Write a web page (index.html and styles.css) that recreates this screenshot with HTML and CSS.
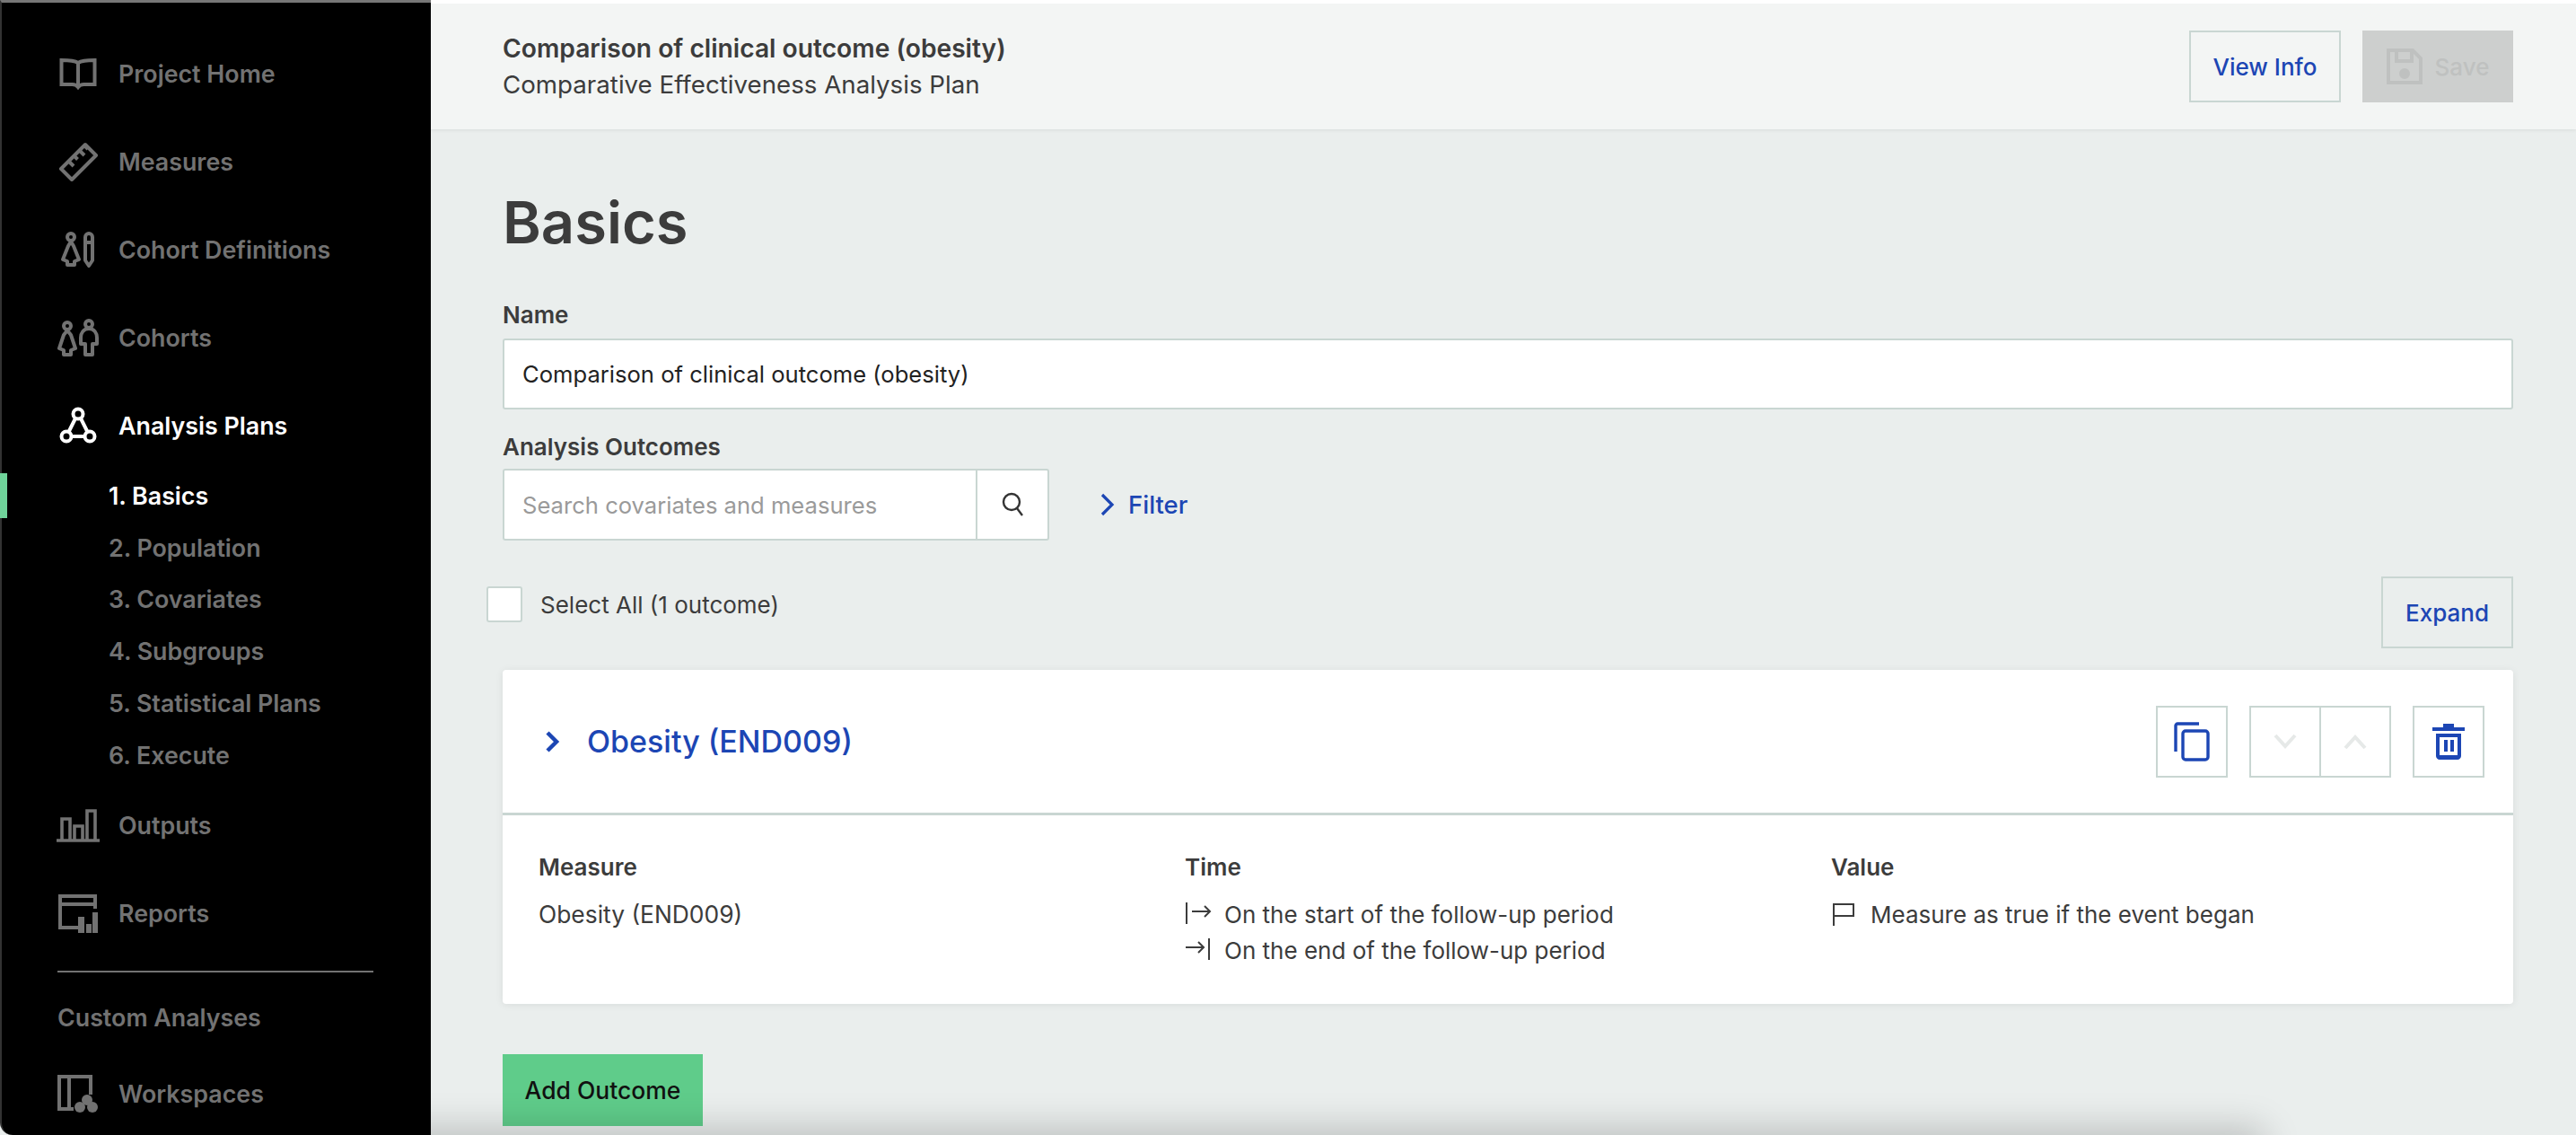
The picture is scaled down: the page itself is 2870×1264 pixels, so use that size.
FILE: index.html
```html
<!DOCTYPE html>
<html>
  <head>
    <title>Basics</title>
    <link rel="stylesheet" href="styles.css">
  </head>
  <body>
    <div class="app">
      <nav class="sidebar">
        <a class="nav-item">
          <span class="nav-icon">
            <svg width="42" height="36" viewBox="0 0 42 36" fill="none" stroke="currentColor" stroke-width="4"><path d="M21 6c-3-2-7-3-18.500-3v27h12c3 0 5 1 6.500 3 1.500-2 3.500-3 6.500-3h12V3C28 3 24 4 21 6zM21 6v27"/></svg>
          </span>
          Project Home
        </a>
        <a class="nav-item">
          <span class="nav-icon">
            <svg width="44" height="44" viewBox="0 0 44 44" fill="none" stroke="currentColor" stroke-width="4" stroke-linejoin="round"><path d="M3 30 30 3l12 12-27 27z"/><path d="M11 22l5 5M17 16l3.500 3.500M23 10l5 5M29 5l3 3" transform="translate(1 0)"/></svg>
          </span>
          Measures
        </a>
        <a class="nav-item">
          <span class="nav-icon">
            <svg width="40" height="40" viewBox="0 0 40 40" fill="none" stroke="currentColor" stroke-width="4" stroke-linejoin="round"><circle cx="12" cy="6" r="4"/><path d="M12 11 9 16 3 31l5 2v4h8v-4l5-2-6-15z"/><path d="M28 6c0-2 2-4 4-4s4 2 4 4v26l-4 6-4-6zM28 12h8"/></svg>
          </span>
          Cohort Definitions
        </a>
        <a class="nav-item">
          <span class="nav-icon">
            <svg width="46" height="42" viewBox="0 0 46 42" fill="none" stroke="currentColor" stroke-width="4" stroke-linejoin="round"><circle cx="11" cy="8" r="4"/><path d="M11 13 7 18 2 33l5 2v5h8v-5l5-2-5-15z"/><circle cx="35" cy="6" r="4"/><path d="M35 11c-6 0-9 5-9 10v7h5v12h8V28h5v-7c0-5-3-10-9-10z"/></svg>
          </span>
          Cohorts
        </a>
        <a class="nav-item active">
          <span class="nav-icon">
            <svg width="42" height="42" viewBox="0 0 42 42" fill="none" stroke="currentColor" stroke-width="4"><circle cx="21" cy="8" r="5.500"/><circle cx="8" cy="33" r="5.500"/><circle cx="34" cy="33" r="5.500"/><path d="M18 13 10.500 28M24 13l7.500 15M13.500 33h15"/></svg>
          </span>
          Analysis Plans
        </a>
        <ul class="sub-list">
          <li class="sub-item active">1. Basics</li>
          <li class="sub-item">2. Population</li>
          <li class="sub-item">3. Covariates</li>
          <li class="sub-item">4. Subgroups</li>
          <li class="sub-item">5. Statistical Plans</li>
          <li class="sub-item">6. Execute</li>
        </ul>
        <a class="nav-item">
          <span class="nav-icon">
            <svg width="48" height="38" viewBox="0 0 48 38" fill="none" stroke="currentColor" stroke-width="3.600"><path d="M0 36h48M6 36V12h9v24M20 36V20h9v16M34 36V3h9v33"/></svg>
          </span>
          Outputs
        </a>
        <a class="nav-item">
          <span class="nav-icon">
            <svg width="44" height="44" viewBox="0 0 44 44" fill="none"><path d="M25 38H2V3h39v14M2 12h39" stroke="currentColor" stroke-width="4"/><path d="M22 26h7v18h-7zM31 34h6v10h-6zM38 21h6v23h-6z" fill="currentColor"/></svg>
          </span>
          Reports
        </a>
        <hr class="nav-divider">
        <div class="nav-heading">Custom Analyses</div>
        <a class="nav-item nav-item-last">
          <span class="nav-icon">
            <svg width="46" height="42" viewBox="0 0 46 42" fill="none"><path d="M18 38H2V2h35v20M13 2v36" stroke="currentColor" stroke-width="4"/><circle cx="33" cy="28" r="6" fill="currentColor"/><circle cx="25" cy="36" r="6" fill="currentColor"/><circle cx="39" cy="36" r="6" fill="currentColor"/></svg>
          </span>
          Workspaces
        </a>
      </nav>

      <div class="main">
        <header class="top-bar">
          <div class="top-titles">
            <div class="top-title">Comparison of clinical outcome (obesity)</div>
            <div class="top-subtitle">Comparative Effectiveness Analysis Plan</div>
          </div>
          <div class="top-actions">
            <button class="btn btn-view">View Info</button>
            <button class="btn btn-save">
              <svg width="40" height="40" viewBox="0 0 40 40" fill="none" stroke="currentColor" stroke-width="4"><path d="M2 2h27l9 9v27H2zM11 2v12h17V2"/><circle cx="20" cy="28" r="4" fill="currentColor"/></svg>
              Save
            </button>
          </div>
        </header>

        <section class="content">
          <h1 class="page-title">Basics</h1>
          <label class="field-label">Name</label>
          <input class="text-input" value="Comparison of clinical outcome (obesity)">
          <label class="field-label field-label-second">Analysis Outcomes</label>
          <div class="search-row">
            <div class="search-box">
              <input class="search-input" placeholder="Search covariates and measures">
              <span class="search-btn">
                <svg width="26" height="28" viewBox="0 0 26 28" fill="none" stroke="#333" stroke-width="2.400"><circle cx="12" cy="11" r="9"/><path d="M18 18l6 8"/></svg>
              </span>
            </div>
            <a class="filter-link">
              <svg width="18" height="26" viewBox="0 0 18 26" fill="none" stroke="currentColor" stroke-width="3.200"><path d="M3 2l11 11L3 24"/></svg>
              Filter
            </a>
          </div>
          <div class="select-row">
            <label class="select-all">
              <span class="checkbox"></span>
              Select All (1 outcome)
            </label>
            <button class="btn btn-expand">Expand</button>
          </div>

          <div class="card">
            <div class="card-head">
              <div class="card-title">
                <svg width="20" height="26" viewBox="0 0 20 26" fill="none" stroke="currentColor" stroke-width="4.500"><path d="M4 3l10 10L4 23"/></svg>
                Obesity (END009)
              </div>
              <div class="card-actions">
                <button class="icon-btn">
                  <svg width="40" height="44" viewBox="0 0 40 44" fill="none" stroke="#1c46b4" stroke-width="3.400"><path d="M28 2H4c-1 0-2 1-2 2v29"/><rect x="10" y="10" width="28" height="32" rx="3"/></svg>
                </button>
                <div class="btn-group">
                  <button class="icon-btn">
                    <svg width="26" height="18" viewBox="0 0 26 18" fill="none" stroke="#e6e9e8" stroke-width="4"><path d="M2 2l11 12L24 2"/></svg>
                  </button>
                  <button class="icon-btn">
                    <svg width="26" height="18" viewBox="0 0 26 18" fill="none" stroke="#e6e9e8" stroke-width="4"><path d="M2 16 13 4l11 12"/></svg>
                  </button>
                </div>
                <button class="icon-btn">
                  <svg width="36" height="40" viewBox="0 0 36 40" fill="#1c46b4"><path d="M12 0h12v4h12v4H0V4h12z"/><path fill-rule="evenodd" d="M4 11h28v25c0 2-2 4-4 4H8c-2 0-4-2-4-4zm4 4v20h20V15z"/><path d="M13 18h4v13h-4zM20 18h4v13h-4z"/></svg>
                </button>
              </div>
            </div>
            <div class="card-body">
              <div class="card-col">
                <div class="col-label">Measure</div>
                <div class="col-line col-line-plain">Obesity (END009)</div>
              </div>
              <div class="card-col">
                <div class="col-label">Time</div>
                <div class="col-line">
                  <svg class="col-icon" width="30" height="26" viewBox="0 0 30 26" fill="none" stroke="#3c3c3c" stroke-width="2"><path d="M2 0v24M8 10h20M22 4l6 6-6 6"/></svg>
                  On the start of the follow-up period
                </div>
                <div class="col-line">
                  <svg class="col-icon" width="30" height="26" viewBox="0 0 30 26" fill="none" stroke="#3c3c3c" stroke-width="2"><path d="M27 0v24M1 10h20M15 4l6 6-6 6"/></svg>
                  On the end of the follow-up period
                </div>
              </div>
              <div class="card-col">
                <div class="col-label">Value</div>
                <div class="col-line">
                  <svg class="col-icon" width="30" height="26" viewBox="0 0 30 26" fill="none" stroke="#3c3c3c" stroke-width="2"><path d="M3 26V2h22v13H3"/></svg>
                  Measure as true if the event began
                </div>
              </div>
            </div>
          </div>

          <button class="btn btn-add">Add Outcome</button>
        </section>
        <div class="window-shadow"></div>
      </div>
    </div>
  </body>
</html>
```

FILE: styles.css
```css
* {
  box-sizing: border-box;
}
body {
  margin: 0;
  height: 1264px;
  overflow: hidden;
  background: #eaeeed;
  font-family: "Inter", "Liberation Sans", sans-serif;
  font-size: 26px;
  color: #3c3c3c;
}
button,
input {
  font-family: inherit;
  font-size: inherit;
}
.app {
  display: flex;
  height: 1264px;
}

/* sidebar */
.sidebar {
  width: 480px;
  flex-shrink: 0;
  background: #000;
  color: #727272;
  padding-top: 30px;
  border-top: 3px solid #777;
  border-left: 2px solid #333;
  border-bottom-left-radius: 14px;
  font-size: 26.8px;
  font-weight: 600;
}
.nav-item {
  display: flex;
  align-items: center;
  height: 98px;
  padding-left: 60px;
}
.nav-item.active {
  color: #fff;
}
.nav-icon {
  display: flex;
  align-items: center;
  justify-content: center;
  width: 50px;
  margin-right: 20px;
}
.sub-list {
  list-style: none;
  margin: 0;
  padding: 0;
}
.sub-item {
  position: relative;
  display: flex;
  align-items: center;
  height: 57.8px;
  padding-left: 119px;
}
.sub-item.active {
  color: #fff;
}
.sub-item.active::before {
  content: "";
  position: absolute;
  left: -2px;
  top: 4px;
  width: 8px;
  height: 50px;
  background: #6fd39a;
}
.nav-divider {
  margin: 15px 64px 0 62px;
  border: none;
  border-top: 2px solid #727272;
}
.nav-heading {
  display: flex;
  align-items: center;
  height: 58px;
  margin-top: 21px;
  padding-left: 62px;
}
.nav-item-last {
  height: 80px;
  margin-top: 16px;
}

/* main */
.main {
  position: relative;
  flex: 1;
  overflow: hidden;
}
.top-bar {
  display: flex;
  align-items: center;
  justify-content: space-between;
  height: 144px;
  padding: 0 70px 0 80px;
  background: #f3f5f4;
  border-top: 4px solid #fff;
  box-shadow: 0 1px 4px rgba(0, 0, 0, 0.08);
}
.top-title {
  font-size: 28.2px;
  font-weight: 600;
  line-height: 40px;
}
.top-subtitle {
  font-size: 27.7px;
  line-height: 40px;
}
.top-actions {
  display: flex;
  gap: 24px;
}
.btn {
  height: 80px;
  border: 2px solid #c9d6d2;
  border-radius: 0;
  background: transparent;
  color: #1c46b4;
  font-weight: 500;
}
.btn-view {
  width: 169px;
}
.btn-save {
  display: flex;
  align-items: center;
  justify-content: center;
  gap: 14px;
  width: 168px;
  background: #cdcfce;
  border-color: #cdcfce;
  color: #bfc1c0;
}
.content {
  padding: 0 70px 0 80px;
}
.page-title {
  margin: 60px 0 0;
  font-size: 65px;
  line-height: 88px;
  font-weight: 600;
}
.field-label {
  display: block;
  margin-top: 41px;
  line-height: 36px;
  font-weight: 600;
}
.field-label-second {
  margin-top: 24px;
}
.text-input {
  display: block;
  width: 100%;
  height: 79px;
  margin-top: 8px;
  padding: 0 20px;
  border: 2px solid #c9d6d2;
  border-radius: 3px;
  background: #fff;
  color: #222;
  font-size: 25.6px;
}
.search-row {
  display: flex;
  align-items: center;
  margin-top: 6px;
}
.search-box {
  display: flex;
  width: 609px;
  height: 80px;
  border: 2px solid #c9d6d2;
  border-radius: 3px;
  background: #fff;
}
.search-input {
  flex: 1;
  min-width: 0;
  padding: 0 20px;
  border: none;
  background: transparent;
  font-size: 25.6px;
}
.search-input::placeholder {
  color: #9a9a9a;
}
.search-btn {
  display: flex;
  align-items: center;
  justify-content: center;
  width: 80px;
  border-left: 2px solid #c9d6d2;
}
.filter-link {
  display: flex;
  align-items: center;
  gap: 14px;
  margin-left: 56px;
  color: #1c46b4;
  font-size: 27.5px;
  font-weight: 500;
}
.select-row {
  display: flex;
  align-items: flex-start;
  justify-content: space-between;
  margin-top: 40px;
}
.select-all {
  display: flex;
  align-items: center;
  gap: 20px;
  margin-left: -18px;
  margin-top: 11px;
}
.checkbox {
  width: 40px;
  height: 40px;
  border: 2px solid #c9d6d2;
  border-radius: 3px;
  background: #fff;
}
.btn-expand {
  width: 147px;
}
.card {
  margin-top: 24px;
  background: #fff;
  border-radius: 4px;
  box-shadow: 0 1px 8px rgba(0, 0, 0, 0.08);
}
.card-head {
  display: flex;
  align-items: center;
  justify-content: space-between;
  height: 162px;
  padding: 0 32px 0 46px;
  border-bottom: 3px solid #c9d6d2;
}
.card-title {
  display: flex;
  align-items: center;
  gap: 28px;
  font-size: 34px;
  font-weight: 500;
  color: #1c46b4;
}
.card-actions {
  display: flex;
  gap: 24px;
}
.btn-group {
  display: flex;
}
.btn-group .icon-btn + .icon-btn {
  margin-left: -2px;
}
.icon-btn {
  display: flex;
  align-items: center;
  justify-content: center;
  width: 80px;
  height: 80px;
  padding: 0;
  border: 2px solid #c9d6d2;
  background: #fff;
}
.card-body {
  display: grid;
  grid-template-columns: repeat(3, 720px);
  height: 210px;
  padding: 40px 0 0 40px;
}
.col-label {
  font-weight: 600;
  line-height: 36px;
  margin-bottom: 14px;
}
.col-line {
  display: flex;
  align-items: center;
  height: 40px;
  gap: 14px;
}
.col-line-plain {
  font-size: 26.4px;
}
.col-icon {
  flex-shrink: 0;
}
.btn-add {
  display: block;
  width: 223px;
  margin-top: 56px;
  border: none;
  background: #5fcc8a;
  color: #111;
  font-size: 26.5px;
}
.window-shadow {
  position: absolute;
  left: -80px;
  width: 2122px;
  top: 1264px;
  height: 40px;
  box-shadow: 0 -6px 40px rgba(0, 0, 0, 0.22);
}
```
